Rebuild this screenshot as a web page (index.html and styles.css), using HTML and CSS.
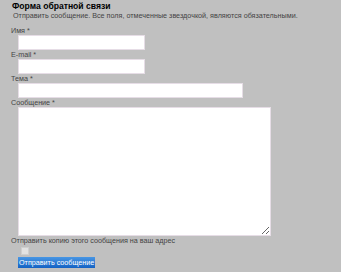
FILE: index.html
```html
<!DOCTYPE html>
<html lang="ru">
<head>
  <meta charset="UTF-8">
  <meta name="viewport" content="width=device-width, initial-scale=1.0">
  <title>Форма обратной связи</title>
  <link rel="stylesheet" href="styles.css">
</head>
<body>
  <div id="contact-form">
    <h1 class="form-title">Форма обратной связи</h1>
    <p class="form-intro">Отправить сообщение. Все поля, отмеченные звездочкой, являются обязательными.</p>
    <form>
      <label class="field-label" for="name">Имя *</label>
      <input class="field field-short" type="text" id="name">
      <label class="field-label" for="email">E-mail *</label>
      <input class="field field-short" type="text" id="email">
      <label class="field-label" for="subject">Тема *</label>
      <input class="field field-long" type="text" id="subject">
      <label class="field-label" for="message">Сообщение *</label>
      <textarea class="field field-message" id="message"></textarea>
      <label class="field-label" for="copy">Отправить копию этого сообщения на ваш адрес</label>
      <input class="copy-check" type="checkbox" id="copy">
      <button class="send-button" type="submit">Отправить сообщение</button>
    </form>
  </div>
</body>
</html>
```

FILE: styles.css
```css
body {
  margin: 0;
  background-color: #c0c0c0;
  font-family: "Liberation Sans", Arial, sans-serif;
  font-size: 7.2px;
  color: #333;
}

#contact-form {
  padding: 1px 0 0 11px;
}

.form-title {
  margin: 0 0 0 1px;
  font-size: 8.6px;
  line-height: 10px;
  color: #000;
}

.form-intro {
  margin: 0 0 6px 2px;
  line-height: 9px;
  color: #444;
}

form {
  display: flex;
  flex-direction: column;
  align-items: flex-start;
}

.field-label {
  display: block;
  line-height: 9px;
  color: #444;
}

.field {
  box-sizing: border-box;
  margin: 0 0 0 7px;
  padding: 0 2px;
  border: 1px solid #e6dde6;
  background: #fff;
  font-family: inherit;
  font-size: 8px;
}

.field-short {
  width: 127px;
  height: 15px;
}

.field-long {
  width: 225px;
  height: 15px;
}

.field-message {
  width: 253px;
  height: 129px;
}

.copy-check {
  appearance: none;
  box-sizing: border-box;
  width: 8px;
  height: 8px;
  margin: 2px 0 0 10px;
  border: 1px solid #cfcfcf;
  background: #e2e2e2;
}

.send-button {
  margin: 2px 0 0 7px;
  padding: 0 1px;
  height: 11px;
  border: none;
  background: linear-gradient(#4896e4, #1462c4);
  color: #fff;
  font-family: inherit;
  font-size: 7.2px;
  line-height: 11px;
  cursor: pointer;
}
```
